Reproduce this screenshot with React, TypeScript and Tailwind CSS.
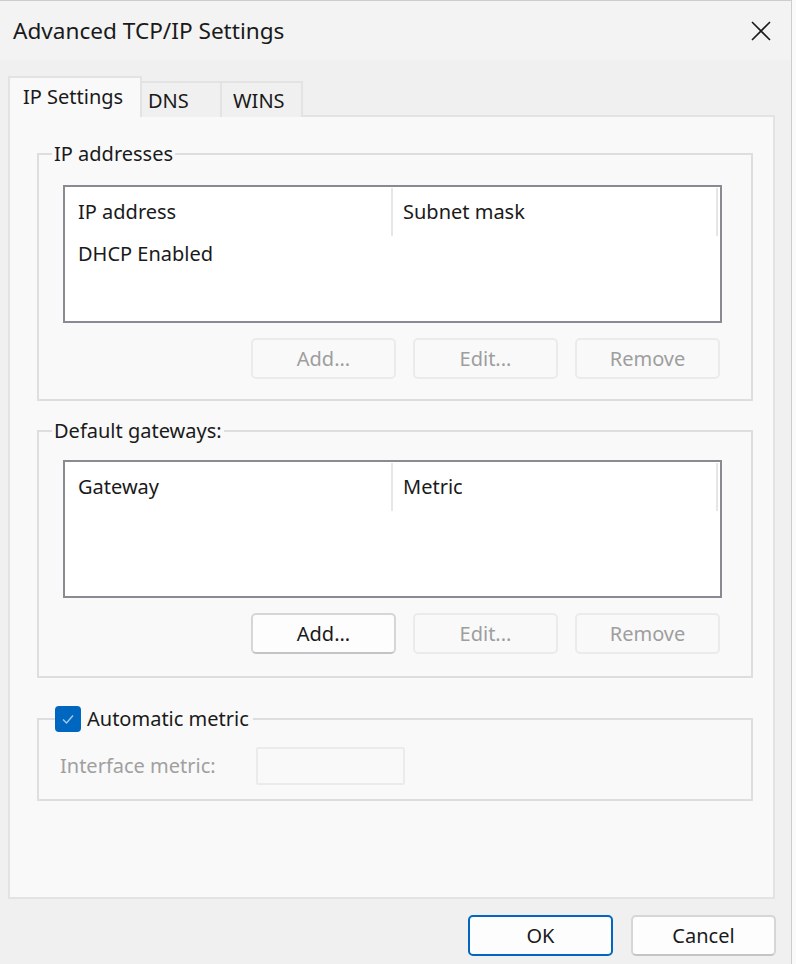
import React from "react";

function Btn({ label, disabled, primary }: { label: string; disabled?: boolean; primary?: boolean }) {
  if (disabled) {
    return (
      <div className="w-[145px] h-[41px] flex items-center justify-center rounded-[5px] border-2 border-[#ebebeb] bg-[#f9f9f9] text-[#9e9e9e]">
        {label}
      </div>
    );
  }
  if (primary) {
    return (
      <div className="w-[145px] h-[41px] flex items-center justify-center rounded-[5px] border-2 border-[#0067c0] bg-[#fdfdfd] text-[#1a1a1a]">
        {label}
      </div>
    );
  }
  return (
    <div className="w-[145px] h-[41px] flex items-center justify-center rounded-[5px] border-2 border-[#d6d6d6] border-b-[#c4c4c4] bg-[#fdfdfd] text-[#1a1a1a]">
      {label}
    </div>
  );
}

function ListBox({ col1, col2, rows }: { col1: string; col2: string; rows: string[] }) {
  return (
    <div className="w-[659px] h-[138px] border-2 border-[#8a8a92] bg-white flex flex-col">
      <div className="h-[49px] flex pt-[1px]">
        <div className="w-[326px] flex items-center pl-[13px]">{col1}</div>
        <div className="w-[2px] bg-[#e6e6e6]" />
        <div className="w-[323px] flex items-center pl-[10px]">{col2}</div>
        <div className="w-[2px] bg-[#e6e6e6]" />
      </div>
      {rows.map((r) => (
        <div key={r} className="h-[36px] flex items-center pl-[13px]">
          {r}
        </div>
      ))}
    </div>
  );
}

export default function App() {
  return (
    <div className="w-[796px] h-[964px] bg-[#fafafa] font-['Noto_Sans',sans-serif] text-[20px] leading-[24px] text-[#1a1a1a]">
      <div className="w-[792px] h-[964px] bg-[#f0f0f0] border-r border-t border-[#cdcdcd] flex flex-col">
        {/* Title bar */}
        <div className="h-[59px] bg-[#f3f3f3] flex items-center justify-between pl-[13px] pr-[20px]">
          <div className="text-[22.6px] leading-[30px]">Advanced TCP/IP Settings</div>
          <svg width="20" height="20" viewBox="0 0 20 20">
            <path d="M1 1 L19 19 M19 1 L1 19" stroke="#1a1a1a" strokeWidth="1.6" fill="none" />
          </svg>
        </div>

        <div className="flex-1 flex flex-col pl-[8px] pr-[16px]">
          {/* Tabs */}
          <div className="mt-[17px] h-[40px] flex items-end relative z-10 mb-[-2px]">
            <div className="w-[134px] h-[41px] border-2 border-b-0 border-[#e3e3e3] bg-[#f9f9f9] pl-[13px] pt-[7px]">
              IP Settings
            </div>
            <div className="w-[80px] h-[36px] border-2 border-l-0 border-b-0 border-[#e3e3e3] bg-[#f0f0f0] pl-[6px] pt-[6px]">
              DNS
            </div>
            <div className="w-[81px] h-[36px] border-2 border-l-0 border-b-0 border-[#e3e3e3] bg-[#f0f0f0] pl-[11px] pt-[6px]">
              WINS
            </div>
          </div>

          {/* Panel */}
          <div className="h-[784px] border-2 border-[#e3e3e3] bg-[#f9f9f9] flex flex-col">
            {/* IP addresses */}
            <fieldset className="ml-[27px] w-[716px] mt-[25px] border-2 border-[#dedede] pl-[24px] pt-[19px] pb-[20px]">
              <legend className="ml-[-11px] px-[2px]">IP addresses</legend>
              <ListBox col1="IP address" col2="Subnet mask" rows={["DHCP Enabled"]} />
              <div className="mt-[15px] flex justify-end gap-[17px] pr-[2px] w-[659px]">
                <Btn label="Add..." disabled />
                <Btn label="Edit..." disabled />
                <Btn label="Remove" disabled />
              </div>
            </fieldset>

            {/* Default gateways */}
            <fieldset className="ml-[27px] w-[716px] mt-[18px] border-2 border-[#dedede] pl-[24px] pt-[17px] pb-[22px]">
              <legend className="ml-[-11px] px-[2px]">Default gateways:</legend>
              <ListBox col1="Gateway" col2="Metric" rows={[]} />
              <div className="mt-[15px] flex justify-end gap-[17px] pr-[2px] w-[659px]">
                <Btn label="Add..." />
                <Btn label="Edit..." disabled />
                <Btn label="Remove" disabled />
              </div>
            </fieldset>

            {/* Automatic metric */}
            <fieldset className="ml-[27px] w-[716px] mt-[28px] border-2 border-[#dedede] pl-[21px] pt-[15px] pb-[14px]">
              <legend className="ml-[-5px] pr-[4px] flex items-center gap-[6px]">
                <span className="w-[26px] h-[26px] rounded-[4px] bg-[#0067c0] flex items-center justify-center">
                  <svg width="14" height="14" viewBox="0 0 14 14">
                    <path d="M2 7.5 L5.5 11 L12 3.5" stroke="#a9c8ec" strokeWidth="1.4" fill="none" />
                  </svg>
                </span>
                <span>Automatic metric</span>
              </legend>
              <div className="flex items-center">
                <span className="text-[#a0a0a0] w-[196px]">Interface metric:</span>
                <div className="w-[149px] h-[38px] border-2 border-[#ebebeb] rounded-[2px] bg-[#f9f9f9]" />
              </div>
            </fieldset>
          </div>

          {/* Footer */}
          <div className="pt-[16px] flex justify-end gap-[18px] mr-[-1px]">
            <Btn label="OK" primary />
            <Btn label="Cancel" />
          </div>
        </div>
      </div>
    </div>
  );
}
